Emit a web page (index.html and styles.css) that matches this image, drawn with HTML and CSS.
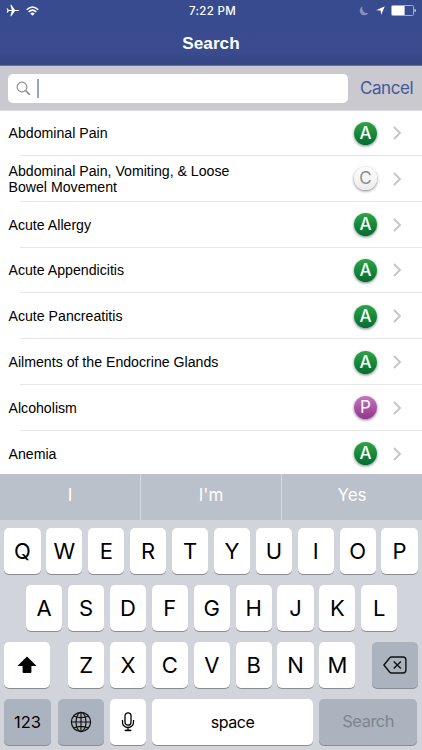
FILE: index.html
```html
<!DOCTYPE html>
<html lang="en">
<head>
<meta charset="utf-8">
<title>Search</title>
<link rel="stylesheet" href="styles.css">
</head>
<body>
<div class="phone">
  <header class="header">
    <div class="status">
      <div class="status-left">
        <svg width="14" height="13" viewBox="0 0 14 13"><path d="M.6 4.200h.9l1.300 1.700h3L4.300.8h1l3.700 5.100h2.900q1.200.1 1.400.6-.2.500-1.400.6H9l-3.700 5.100h-1l1.500-5.100h-3L1.500 8.800H.6l.8-2.300z" fill="#fff"/></svg>
        <svg width="13" height="10" viewBox="0 0 13 10"><g fill="none" stroke="#fff" stroke-width="1.5"><path d="M.7 3.7q5.8-5.5 11.6 0"/><path d="M2.7 5.9q3.8-3.5 7.6 0"/></g><path d="M4.3 7.5q2.2-1.8 4.4 0L6.5 9.8z" fill="#fff"/></svg>
      </div>
      <div class="time">7:22 PM</div>
      <div class="status-right">
        <svg width="10" height="10" viewBox="0 0 10 10"><path d="M3.6.5A4.6 4.6 0 1 0 9.5 6.7 4.7 4.7 0 0 1 3.6.5z" fill="#8290c0"/></svg>
        <svg width="9" height="9" viewBox="0 0 9 9"><path d="M8.8.2L5.200 8.8 4.6 4.600.2 4.200z" fill="#fff"/></svg>
        <svg width="25" height="11" viewBox="0 0 25 11"><rect x=".5" y=".5" width="22" height="10" rx="1" fill="none" stroke="#a0abd2"/><path d="M1 1h12.6v9H1z" fill="#fff"/><path d="M23.5 3.7q1.3.1 1.3 1.8t-1.3 1.8z" fill="#dce1f2"/></svg>
      </div>
    </div>
    <h1 class="title">Search</h1>
  </header>

  <div class="searchbar">
    <div class="field">
      <svg width="15" height="15" viewBox="0 0 15 15"><g fill="none" stroke="#8b8b8f"><circle cx="6" cy="6" r="4.9" stroke-width="1.1"/><path d="M9.6 9.6l4.2 4.2" stroke-width="1.6"/></g></svg>
      <span class="caret"></span>
    </div>
    <div class="cancel">Cancel</div>
  </div>

  <main class="list">
    <div class="row"><span class="name">Abdominal Pain</span><span class="badge green">A</span><svg class="chev" viewBox="0 0 8 14"><path d="M1 1l6 6-6 6"/></svg></div>
    <div class="row"><span class="name">Abdominal Pain, Vomiting, &amp; Loose<br>Bowel Movement</span><span class="badge white">C</span><svg class="chev" viewBox="0 0 8 14"><path d="M1 1l6 6-6 6"/></svg></div>
    <div class="row"><span class="name">Acute Allergy</span><span class="badge green">A</span><svg class="chev" viewBox="0 0 8 14"><path d="M1 1l6 6-6 6"/></svg></div>
    <div class="row"><span class="name">Acute Appendicitis</span><span class="badge green">A</span><svg class="chev" viewBox="0 0 8 14"><path d="M1 1l6 6-6 6"/></svg></div>
    <div class="row"><span class="name">Acute Pancreatitis</span><span class="badge green">A</span><svg class="chev" viewBox="0 0 8 14"><path d="M1 1l6 6-6 6"/></svg></div>
    <div class="row"><span class="name">Ailments of the Endocrine Glands</span><span class="badge green">A</span><svg class="chev" viewBox="0 0 8 14"><path d="M1 1l6 6-6 6"/></svg></div>
    <div class="row"><span class="name">Alcoholism</span><span class="badge purple">P</span><svg class="chev" viewBox="0 0 8 14"><path d="M1 1l6 6-6 6"/></svg></div>
    <div class="row"><span class="name">Anemia</span><span class="badge green">A</span><svg class="chev" viewBox="0 0 8 14"><path d="M1 1l6 6-6 6"/></svg></div>
  </main>

  <div class="suggestions"><span>I</span><span>I'm</span><span>Yes</span></div>

  <div class="keyboard">
    <div class="keys">
      <span class="key">Q</span><span class="key">W</span><span class="key">E</span><span class="key">R</span><span class="key">T</span><span class="key">Y</span><span class="key">U</span><span class="key">I</span><span class="key">O</span><span class="key">P</span>
    </div>
    <div class="keys home">
      <span class="key">A</span><span class="key">S</span><span class="key">D</span><span class="key">F</span><span class="key">G</span><span class="key">H</span><span class="key">J</span><span class="key">K</span><span class="key">L</span>
    </div>
    <div class="keys edge">
      <span class="key wide"><svg width="20" height="18" viewBox="0 0 20 18"><path d="M10 .6l9.6 9.5h-5.2V16q0 1-1 1H6.6q-1 0-1-1v-5.900H.4z" fill="#000"/></svg></span>
      <div class="keys home">
        <span class="key">Z</span><span class="key">X</span><span class="key">C</span><span class="key">V</span><span class="key">B</span><span class="key">N</span><span class="key">M</span>
      </div>
      <span class="key wide dark"><svg width="24" height="18" viewBox="0 0 24 18"><g fill="none" stroke="#111" stroke-width="1.4" stroke-linejoin="round"><path d="M8.300 1h11.700q2.900 0 2.900 2.900v10.200q0 2.900-2.900 2.900H8.300q-.8 0-1.500-.7L.9 9l5.900-7.300Q7.500 1 8.300 1z"/><path d="M10.700 5.400l7.200 7.200m0-7.200l-7.200 7.200"/></g></svg></span>
    </div>
    <div class="keys bottom">
      <span class="key dark num">123</span>
      <span class="key dark globe"><svg width="22" height="22" viewBox="0 0 22 22"><g fill="none" stroke="#111" stroke-width="1.200"><circle cx="11" cy="11" r="9.600"/><ellipse cx="11" cy="11" rx="5" ry="9.600"/><path d="M11 1.400v19.200M1.400 11h19.200M3.500 5q7.500 3.200 15 0M3.500 17q7.500-3.200 15 0"/></g></svg></span>
      <span class="key"><svg width="14" height="20" viewBox="0 0 14 20"><g fill="none" stroke="#000" stroke-width="1.300"><rect x="4" y=".8" width="6" height="12.400" rx="3"/><path d="M1.500 8v2.500a5.500 5 0 0 0 11 0V8M7 15.500v3"/><path d="M3.700 18.400h6.600" stroke-width="1.600"/></g></svg></span>
      <span class="key space">space</span>
      <span class="key dark search">Search</span>
    </div>
  </div>
</div>
</body>
</html>
```
FILE: styles.css
```css
* { box-sizing: border-box; }
body { margin: 0; background: #fff; }
svg { display: block; flex: none; }
.phone {
  width: 422px; height: 750px; overflow: hidden;
  display: flex; flex-direction: column;
  font-family: Inter, sans-serif;
}
.header {
  height: 66px; flex: none; color: #fff;
  background: linear-gradient(#374b8e, #3a4c8e 80%, #354583);
  border-bottom: 1px solid #63709f;
}
.status {
  height: 21px; padding: 0 6px;
  display: grid; grid-template-columns: 1fr auto 1fr; align-items: center;
}
.status-left { display: flex; align-items: center; gap: 6px; }
.status-right { display: flex; align-items: center; justify-content: flex-end; gap: 6px; }
.status-right svg:first-child { margin-right: 1px; }
.time { padding-left: 3px; font-size: 11.5px; font-weight: 500; letter-spacing: .35px; }
.title {
  margin: 12px 0 0; text-align: center;
  font: bold 17.2px/21px "Liberation Sans", sans-serif;
}
.searchbar {
  height: 45px; flex: none; padding: 0 8px;
  display: flex; align-items: center;
  background: #c9c9cf; border-bottom: 1px solid #dedee1;
}
.field {
  width: 340px; height: 29px; padding-left: 8px; border-radius: 5px;
  background: #fff; display: flex; align-items: center; gap: 6px;
}
.caret { width: 2px; height: 19px; background: #93a6c8; }
.cancel { margin: -1px 0 0 12px; font-size: 17px; letter-spacing: -.45px; color: #43599b; }
.list { height: 363px; flex: none; overflow: hidden; }
.row {
  height: 45.85px; padding: 0 20px 0 8.5px;
  display: flex; align-items: center;
  background: linear-gradient(#e6e6e8, #e6e6e8) 20px 100% / 402px 1px no-repeat;
}
.row:first-child { height: 44.85px; }
.row:last-child { background: none; }
.name { flex: 1; font: 14.15px/16px "Liberation Sans", sans-serif; color: #000; }
.badge {
  width: 23px; height: 23px; margin-right: 16px; border-radius: 50%;
  font: 17px/23px Inter, sans-serif; text-align: center; color: #fff;
  box-shadow: 0 1px 3px rgba(0, 0, 0, .5);
}
.green { background: linear-gradient(#2ba545, #056c33); font-weight: 500; }
.purple { background: linear-gradient(#c277bd, #913590); }
.white { background: linear-gradient(#fff, #ececec); color: #8c8c8c; }
.chev { width: 8px; height: 14px; margin-right: 1px; overflow: visible; }
.chev path { fill: none; stroke: #c3c3c9; stroke-width: 1.8; }
.suggestions {
  height: 46px; flex: none;
  display: grid; grid-template-columns: 140px 141px 141px;
  background: #bac1ca; color: #fff;
}
.suggestions span { text-align: center; font-size: 17px; line-height: 43px; }
.suggestions span + span { border-left: 1px solid #d5dae0; }
.keyboard {
  flex: 1; padding: 8px 4px 0;
  display: flex; flex-direction: column; gap: 11.4px;
  background: #d1d4db;
}
.keys { display: flex; justify-content: center; gap: 5.8px; }
.keys.home { padding-left: 1.5px; }
.keys.edge { justify-content: space-between; }
.keys.bottom { justify-content: flex-start; }
.key {
  width: 36.1px; height: 45.6px; flex: none; border-radius: 5px;
  display: flex; align-items: center; justify-content: center;
  background: #fff; color: #000; font-size: 22px;
  box-shadow: 0 1px 0 #898c91;
}
.dark { background: #abb3be; }
.wide { width: 46px; }
.num { width: 47px; font-size: 16.5px; }
.globe { width: 46.600px; margin-left: 1px; }
.space { width: 161px; font-size: 16px; letter-spacing: -.4px; }
.search { width: 98.600px; padding-bottom: 2px; font-size: 16.500px; letter-spacing: -.5px; color: #7d858f; }
```
